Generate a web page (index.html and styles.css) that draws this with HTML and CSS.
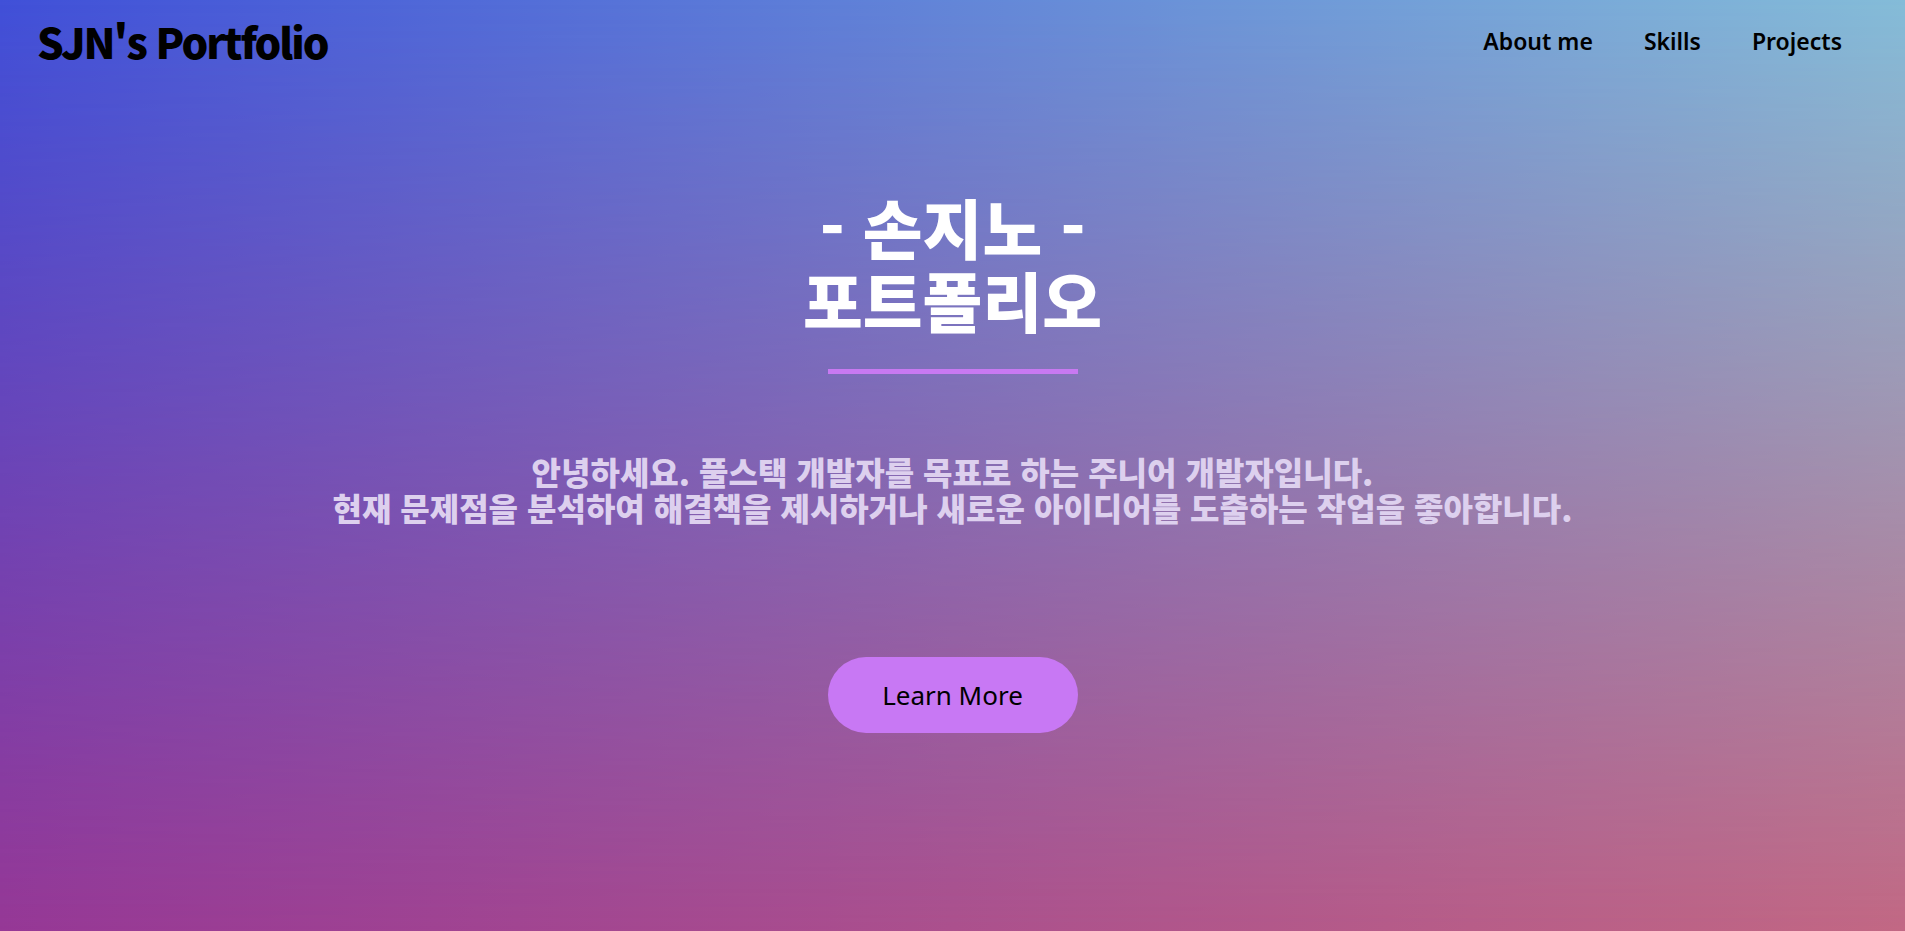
FILE: index.html
```html
<!DOCTYPE html>
<html lang="ko">
<head>
<meta charset="utf-8">
<title>SJN's Portfolio</title>
<link rel="stylesheet" href="styles.css">
</head>
<body>
<div class="page">
  <header class="header">
    <div class="logo">SJN's Portfolio</div>
    <nav class="nav">
      <a class="nav-link" href="#about">About me</a>
      <a class="nav-link" href="#skills">Skills</a>
      <a class="nav-link" href="#projects">Projects</a>
    </nav>
  </header>
  <main class="hero">
    <h1 class="hero-title">- 손지노 -<br>포트폴리오</h1>
    <div class="hero-line"></div>
    <p class="hero-text">안녕하세요. 풀스택 개발자를 목표로 하는 주니어 개발자입니다.<br>현재 문제점을 분석하여 해결책을 제시하거나 새로운 아이디어를 도출하는 작업을 좋아합니다.</p>
    <a class="hero-button" href="#about">Learn More</a>
  </main>
</div>
</body>
</html>
```
FILE: styles.css
```css
html, body {
  margin: 0;
  padding: 0;
}
body {
  font-family: "Noto Sans", "Noto Sans CJK KR", sans-serif;
}
.page {
  position: relative;
  height: 931px;
  overflow: hidden;
  background: linear-gradient(to right, #963896, #c26884);
}
.page::before {
  content: "";
  position: absolute;
  inset: 0;
  background: linear-gradient(to right, #4050d8, #84bcd8);
  -webkit-mask-image: linear-gradient(to bottom, #000, rgba(0,0,0,0));
  mask-image: linear-gradient(to bottom, #000, rgba(0,0,0,0));
  z-index: 0;
}
.header, .hero {
  position: relative;
  z-index: 1;
}
.header {
  height: 82px;
  display: flex;
  align-items: center;
  justify-content: space-between;
  padding: 0 63px 0 37px;
}
.logo {
  font-family: "Noto Sans CJK KR", sans-serif;
  font-weight: 900;
  font-size: 42px;
  letter-spacing: -2px;
  line-height: 1;
  color: #000;
}
.nav {
  display: flex;
  gap: 51px;
}
.nav-link {
  font-family: "Noto Sans", sans-serif;
  font-weight: 600;
  font-size: 23px;
  color: #000;
  text-decoration: none;
}
.hero {
  display: flex;
  flex-direction: column;
  align-items: center;
  text-align: center;
  padding-top: 108px;
}
.hero-title {
  margin: 0;
  font-family: "Noto Sans CJK KR", sans-serif;
  font-weight: 900;
  font-size: 65px;
  line-height: 73px;
  color: #fff;
}
.hero-line {
  margin-top: 33px;
  width: 250px;
  height: 5px;
  background: #c879f2;
}
.hero-text {
  margin: 79px 0 0;
  font-family: "Noto Sans CJK KR", sans-serif;
  font-weight: 900;
  font-size: 32px;
  line-height: 36px;
  color: #ddd0ee;
}
.hero-button {
  margin-top: 132px;
  width: 250px;
  height: 76px;
  border-radius: 38px;
  background: #c878f4;
  display: flex;
  align-items: center;
  justify-content: center;
  font-family: "Noto Sans", sans-serif;
  font-size: 26px;
  color: #000;
  text-decoration: none;
}
```
